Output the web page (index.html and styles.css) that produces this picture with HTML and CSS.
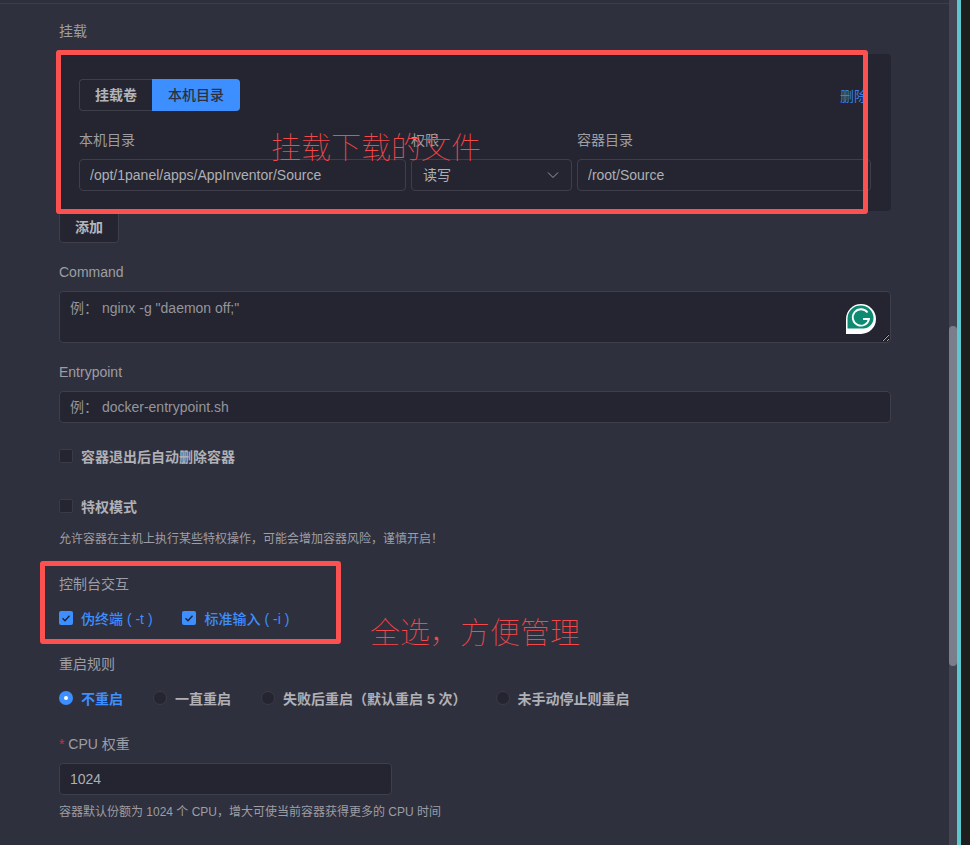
FILE: index.html
```html
<!DOCTYPE html>
<html lang="zh-CN">
<head>
<meta charset="utf-8">
<title>容器配置</title>
<link rel="stylesheet" href="styles.css">
</head>
<body>
<div class="shell">
  <main class="pane">
    <form class="form">
      <div class="label first">挂载</div>
      <section class="card">
        <div class="card-top">
          <div class="seg">
            <span class="seg-item">挂载卷</span>
            <span class="seg-item active">本机目录</span>
          </div>
          <a class="del">删除</a>
        </div>
        <div class="mount-grid">
          <div class="sub-label">本机目录</div>
          <div class="sub-label">权限</div>
          <div class="sub-label">容器目录</div>
          <input class="input" value="/opt/1panel/apps/AppInventor/Source">
          <div class="input select">读写
            <svg class="chev" viewBox="0 0 12 8" width="12" height="8"><path d="M1 1.5l5 5 5-5" fill="none" stroke="#9a9ba3" stroke-width="1"/></svg>
          </div>
          <input class="input" value="/root/Source">
        </div>
      </section>
      <button type="button" class="btn">添加</button>

      <div class="label cmd">Command</div>
      <div class="ta-wrap">
        <textarea class="textarea" placeholder='例： nginx -g "daemon off;"'></textarea>
        <svg class="gram" viewBox="0 0 30 30" width="30" height="30">
          <path d="M15 0a15 15 0 0 1 0 30H0V15A15 15 0 0 1 15 0z" fill="#fff"/>
          <path d="M15 1.500a12.500 12.500 0 0 1 12.500 12.500c0 6-5 10.500-10 10.500H1.500V14A13 13 0 0 1 15 1.500z" fill="#0e8a72"/>
          <path d="M21.500 8.500A8.200 8.200 0 1 0 23 15h-6" fill="none" stroke="#fff" stroke-width="1.800"/>
        </svg>
      </div>

      <div class="label entry">Entrypoint</div>
      <input class="input full" placeholder="例： docker-entrypoint.sh">

      <label class="check-row auto"><span class="box"></span><span class="strong">容器退出后自动删除容器</span></label>
      <label class="check-row priv"><span class="box"></span><span class="strong">特权模式</span></label>
      <div class="help priv-help">允许容器在主机上执行某些特权操作，可能会增加容器风险，谨慎开启！</div>

      <div class="label console">控制台交互</div>
      <div class="checks">
        <label class="check-row on"><span class="box checked"><svg viewBox="0 0 14 14" width="14" height="14"><path d="M3.500 7.200l2.500 2.500 4.500-5" fill="none" stroke="#20212b" stroke-width="1.300"/></svg></span><span>伪终端 ( -t )</span></label>
        <label class="check-row on wide"><span class="box checked"><svg viewBox="0 0 14 14" width="14" height="14"><path d="M3.500 7.200l2.500 2.500 4.500-5" fill="none" stroke="#20212b" stroke-width="1.300"/></svg></span><span>标准输入 ( -i )</span></label>
      </div>

      <div class="label restart">重启规则</div>
      <div class="radios">
        <label class="radio on"><span class="dot checked"></span><span>不重启</span></label>
        <label class="radio r2"><span class="dot"></span><span>一直重启</span></label>
        <label class="radio r3"><span class="dot"></span><span>失败后重启（默认重启 5 次）</span></label>
        <label class="radio r4"><span class="dot"></span><span>未手动停止则重启</span></label>
      </div>

      <div class="label cpu"><span class="req">*</span> CPU 权重</div>
      <input class="input short" value="1024">
      <div class="help cpu-help">容器默认份额为 1024 个 CPU，增大可使当前容器获得更多的 CPU 时间</div>
    </form>
  </main>
  <div class="track"><div class="thumb"></div></div>
  <div class="teal"></div>
  <div class="edge"></div>
</div>

<div class="mark mark-a"></div>
<div class="mark mark-b"></div>
<div class="note note-a">挂载下载的文件</div>
<div class="note note-b">全选，方便管理</div>
</body>
</html>
```
FILE: styles.css
```css
* { box-sizing: border-box; }
html, body { margin: 0; height: 845px; overflow: hidden; }
body {
  position: relative;
  background: #2f303d;
  font-family: "Liberation Sans", "Noto Sans CJK SC", sans-serif;
  font-size: 14px;
  color: #a3a4ab;
}
.shell { display: flex; height: 845px; }
.pane { width: 949px; border-top: 1px solid #3c3d4a; margin-top: 3px; height: 842px; overflow: hidden; }
.track { width: 8px; background: #434552; padding-top: 326px; }
.thumb { height: 340px; background: #7a7d8a; border-radius: 4px; }
.teal { width: 4px; background: #5ac8cc; }
.edge { flex: 1; background: #1e1e1e; }

.form { padding-left: 59px; width: 891px; display: flex; flex-direction: column; align-items: flex-start; }
.label { line-height: 20px; color: #9d9ea5; }
.first { margin-top: 17px; }
.card {
  margin-top: 13px; width: 832px; height: 157px;
  background: #242530; border-radius: 4px; padding: 25px 20px 20px;
}
.card-top { display: flex; justify-content: space-between; align-items: center; padding-right: 3px; }
.seg { display: flex; height: 32px; }
.seg-item {
  display: flex; align-items: center; justify-content: center;
  font-weight: 700; font-size: 14px; color: #b4b5bb; padding-bottom: 2px;
  width: 73px; border: 1px solid #3e3f4b; border-right: 0; border-radius: 4px 0 0 4px;
}
.seg-item.active {
  width: 88px; background: #3d8eff; color: #2f303d; border: 0; border-radius: 0 4px 4px 0; font-weight: 500;
}
.del { color: #3a7fe4; }
.mount-grid {
  display: grid; grid-template-columns: 327px 161px 294px; column-gap: 5px;
  margin-top: 19px; row-gap: 9px;
}
.sub-label { line-height: 20px; color: #9d9ea5; }
.input {
  height: 32px; width: 100%; background: #242530; border: 1px solid #3e3f4b; border-radius: 4px;
  padding: 0 10px; font: inherit; color: #aeafb5; outline: none; line-height: 30px;
}
.input::placeholder, .textarea::placeholder { color: #94959c; opacity: 1; }
.select { display: flex; justify-content: space-between; align-items: center; padding: 0 11px; }
.chev { margin-right: 1px; }
.btn {
  width: 60px; height: 32px; background: #242530; border: 1px solid #3e3f4b; border-radius: 4px;
  font: inherit; font-weight: 700; font-size: 14px; color: #b4b5bb; padding: 0 0 2px;
}
.cmd { margin-top: 19px; }
.ta-wrap { position: relative; margin-top: 9px; width: 832px; height: 52px; }
.textarea {
  display: block; width: 832px; height: 52px; background: #242530; border: 1px solid #3e3f4b; border-radius: 4px;
  padding: 5px 10px; font: inherit; color: #aeafb5; outline: none; resize: vertical;
}
.gram { position: absolute; left: 787px; top: 13px; }
.entry { margin-top: 19px; }
.full { margin-top: 9px; width: 832px; }
.check-row { display: flex; align-items: center; gap: 8px; height: 20px; }
.check-row.wide { gap: 9px; }
.box {
  display: block; width: 14px; height: 14px; background: #242530; border: 1px solid #3a3b47; border-radius: 2px;
}
.box.checked { background: #3d8eff; border: 0; }
.box svg { display: block; }
.strong { font-weight: 700; color: #b0b1b7; }
.auto { margin-top: 23px; }
.priv { margin-top: 30px; }
.help { font-size: 12px; line-height: 18px; color: #9d9ea5; }
.priv-help { margin-top: 14px; }
.console { margin-top: 26px; }
.checks { display: flex; gap: 29px; margin-top: 14px; }
.on { color: #3d8eff; font-weight: 500; }
.restart { margin-top: 26px; }
.radios { display: flex; margin-top: 14px; height: 20px; }
.radio { display: flex; align-items: center; gap: 8px; font-weight: 700; color: #b0b1b7; }
.radio.on { color: #3d8eff; font-weight: 700; }
.r2 { margin-left: 30px; }
.r3 { margin-left: 30px; }
.r4 { margin-left: 29px; }
.dot { display: block; width: 14px; height: 14px; border-radius: 50%; background: #242530; border: 1px solid #3a3b47; }
.dot.checked { background: #3d8eff; border: 0; position: relative; }
.dot.checked::after { content: ""; position: absolute; left: 5px; top: 5px; width: 4px; height: 4px; border-radius: 50%; background: #fff; }
.cpu { margin-top: 26px; }
.req { color: #c0334a; }
.short { margin-top: 9px; width: 333px; }
.cpu-help { margin-top: 8px; }

.mark { position: absolute; border: 5px solid #fb5151; border-radius: 3px; pointer-events: none; }
.mark-a { left: 56px; top: 50px; width: 812px; height: 164px; }
.mark-b { left: 40px; top: 561px; width: 301px; height: 83px; }
.note { position: absolute; font-family: "Noto Sans CJK SC", sans-serif; font-weight: 100; font-size: 30px; line-height: 36px; color: #f5484b; white-space: nowrap; }
.note-a { left: 271px; top: 127px; }
.note-b { left: 370px; top: 612px; }
```
